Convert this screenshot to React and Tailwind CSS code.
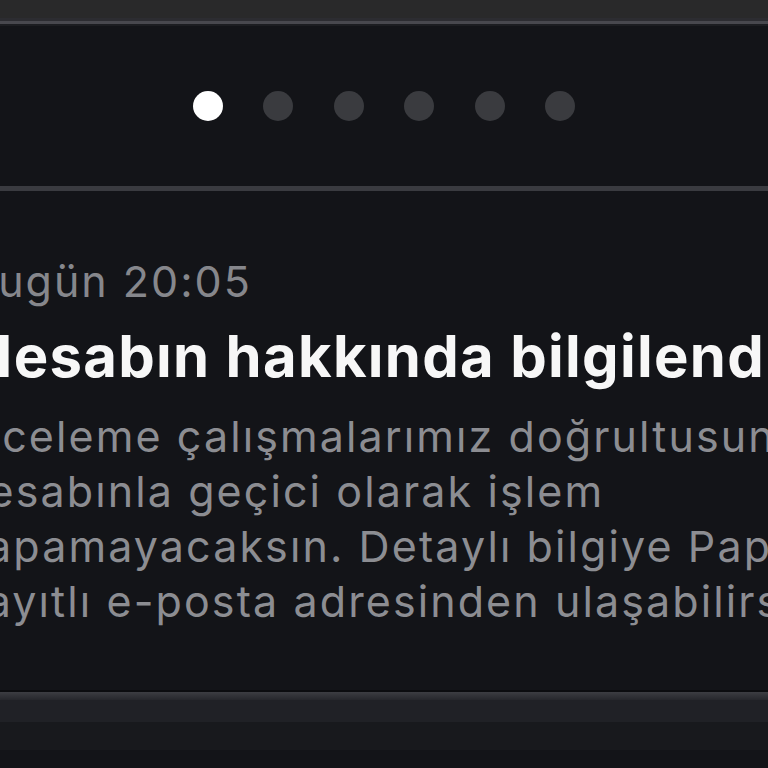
import React from 'react'

const dots = [true, false, false, false, false, false]

function Pager() {
  return (
    <div className="flex items-center justify-center gap-[40.5px] py-[65px]">
      {dots.map((active, i) => (
        <span
          key={i}
          className={
            active
              ? 'h-[30px] w-[30px] rounded-full bg-white'
              : 'h-[30px] w-[30px] rounded-full bg-[#3a3b3f]'
          }
        />
      ))}
    </div>
  )
}

export default function App() {
  return (
    <div
      className="flex h-[768px] w-[768px] flex-col overflow-hidden bg-[#131418]"
      style={{ fontFamily: 'Inter, "Noto Sans", sans-serif' }}
    >
      {/* top sheet edge */}
      <div className="h-[18px] bg-[#29292a]" />
      <div className="h-[3px] bg-[#2c2c31]" />
      <div className="h-[3px] bg-[#48484e]" />
      <div className="h-[2px] bg-[#1c1d21]" />

      <Pager />

      <div className="h-[5px] bg-[#3a3b40]" />

      <div className="flex flex-col whitespace-nowrap pt-[64px]">
        <div className="-ml-[32px] text-[43px] leading-[52px] tracking-[2px] text-[#86878c]">
          Bugün 20:05
        </div>
        <div className="-ml-[31px] mt-[17px] text-[58px] font-bold leading-[64px] tracking-[1.3px] text-[#f7f7f7]">
          Hesabın hakkında bilgilendirme
        </div>
        <p className="-ml-[39px] mt-[21px] text-[43px] leading-[55px] tracking-[2.1px] text-[#8c8d92]">
          İnceleme çalışmalarımız doğrultusunda
          <br />
          hesabınla geçici olarak işlem
          <br />
          yapamayacaksın. Detaylı bilgiye Papara’ya
          <br />
          kayıtlı e-posta adresinden ulaşabilirsin.
        </p>
      </div>

      <div className="mt-auto flex flex-col">
        <div className="h-[2px] bg-[#0b0c0f]" />
        <div className="h-[8px] bg-gradient-to-b from-[#3c3d42] to-[#26272c]" />
        <div className="h-[22px] bg-[#202126]" />
        <div className="h-[28px] bg-[#18191d]" />
        <div className="h-[18px] bg-[#131418]" />
      </div>
    </div>
  )
}
